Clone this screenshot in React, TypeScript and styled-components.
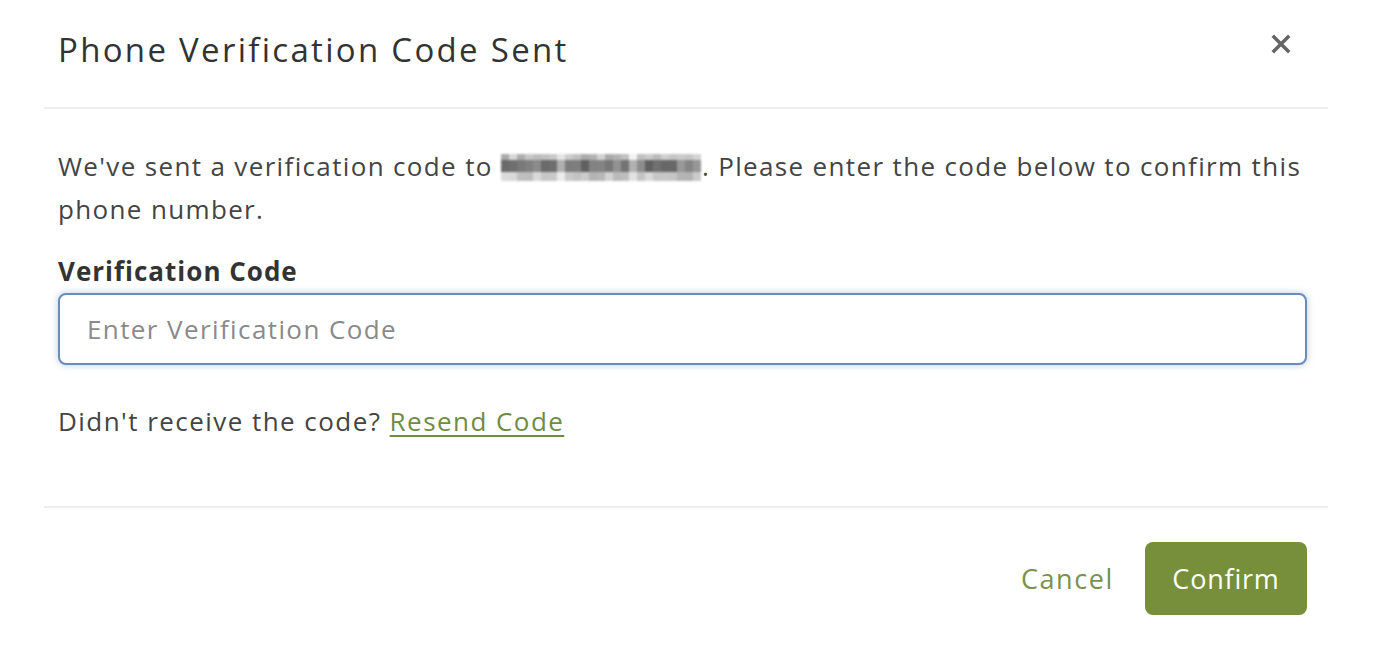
import React from "react";
import styled, { createGlobalStyle } from "styled-components";

const Global = createGlobalStyle`
  html, body { margin: 0; padding: 0; background: #ffffff; }
  body { font-family: "Open Sans", "Liberation Sans", sans-serif; }
  * { box-sizing: border-box; }
`;

const Modal = styled.div`
  width: 1284px;
  margin-left: 44px;
  display: flex;
  flex-direction: column;
  height: 657px;
`;

const Header = styled.div`
  height: 109px;
  display: flex;
  align-items: center;
  justify-content: space-between;
  padding: 0 36px 8px 14px;
  border-bottom: 2px solid #ededed;
`;

const Title = styled.h1`
  margin: 0;
  font-size: 33px;
  font-weight: 400;
  letter-spacing: 2.3px;
  color: #333333;
`;

const CloseButton = styled.button`
  border: none;
  background: none;
  padding: 0;
  width: 22px;
  height: 22px;
  display: flex;
  align-items: center;
  justify-content: center;
  cursor: pointer;
  margin-bottom: 12px;
`;

const Body = styled.div`
  padding: 36px 21px 63px 14px;
  border-bottom: 2px solid #ededed;
`;

const Paragraph = styled.p`
  margin: 0;
  font-size: 26px;
  line-height: 43px;
  letter-spacing: 1.35px;
  color: #444444;
`;

const MaskSvg = styled.svg`
  display: inline-block;
  vertical-align: -5px;
  margin: 0 1px 0 0;
  filter: blur(0.9px);
`;

const Label = styled.label`
  display: block;
  margin-top: 23px;
  font-size: 26px;
  line-height: 34px;
  font-weight: 700;
  letter-spacing: 1px;
  color: #333333;
`;

const Input = styled.input`
  display: block;
  width: 100%;
  height: 72px;
  margin-top: 5px;
  padding: 0 27px;
  border: 2px solid #6a8cba;
  border-radius: 8px;
  box-shadow: 0 0 6px 1px rgba(106, 140, 186, 0.35);
  font-family: inherit;
  font-size: 26px;
  letter-spacing: 1.4px;
  color: #333;
  outline: none;
  &::placeholder { color: #8a8a8a; }
`;

const Resend = styled.p`
  margin: 35px 0 0;
  font-size: 26px;
  line-height: 43px;
  letter-spacing: 1.45px;
  color: #444444;
`;

const Link = styled.a`
  color: #6f8c45;
  text-decoration: underline;
  text-underline-offset: 4px;
  text-decoration-thickness: 2px;
  cursor: pointer;
`;

const Footer = styled.div`
  display: flex;
  justify-content: flex-end;
  align-items: center;
  gap: 31px;
  padding: 34px 21px 0 0;
`;

const CancelButton = styled.button`
  border: none;
  background: none;
  padding: 0;
  font-family: inherit;
  font-size: 27px;
  letter-spacing: 1.6px;
  color: #7a9150;
  cursor: pointer;
`;

const ConfirmButton = styled.button`
  width: 162px;
  height: 73px;
  border: none;
  border-radius: 8px;
  background: #778f3a;
  color: #ffffff;
  font-family: inherit;
  font-size: 27px;
  letter-spacing: 0.8px;
  cursor: pointer;
`;

// pixelated phone-number mask: 25 columns x 3 rows of cells
const MASK_COLS = 25;
const ROWS = [
  { y: 0, h: 6 },
  { y: 6, h: 12 },
  { y: 18, h: 9 },
];
const groups = [0, 0, 0, 0, 0, 0, 0, 1, 0, 0, 0, 0, 0, 0, 0, 0, 1, 0, 0, 0, 0, 0, 0, 0, 0];
const shade = (c: number, r: number) => {
  const seed = Math.abs(Math.sin(c * 12.9898 + r * 78.233) * 43758.5453) % 1;
  if (groups[c] === 1) return r === 1 ? 160 + seed * 30 : 225 + seed * 20;
  if (r === 1) return 95 + seed * 60;
  if (r === 0) return 170 + seed * 50;
  return 175 + seed * 45;
};

function PhoneMask() {
  const cells: React.ReactElement[] = [];
  for (let c = 0; c < MASK_COLS; c++) {
    ROWS.forEach((row, r) => {
      const v = Math.round(shade(c, r));
      cells.push(
        <rect key={`${c}-${r}`} x={c * 8} y={row.y} width={8} height={row.h} fill={`rgb(${v},${v},${v})`} />
      );
    });
  }
  return (
    <MaskSvg width={200} height={27} viewBox="0 0 200 27" aria-hidden="true">
      {cells}
    </MaskSvg>
  );
}

export default function App() {
  return (
    <>
      <Global />
      <Modal>
        <Header>
          <Title>Phone Verification Code Sent</Title>
          <CloseButton aria-label="Close">
            <svg width="20" height="20" viewBox="0 0 20 20">
              <path d="M3 3 L17 17 M17 3 L3 17" stroke="#666" strokeWidth="3.5" strokeLinecap="square" />
            </svg>
          </CloseButton>
        </Header>
        <Body>
          <Paragraph>
            We've sent a verification code to <PhoneMask />. Please enter the code below to confirm this phone number.
          </Paragraph>
          <Label htmlFor="code">Verification Code</Label>
          <Input id="code" placeholder="Enter Verification Code" />
          <Resend>
            Didn't receive the code? <Link>Resend Code</Link>
          </Resend>
        </Body>
        <Footer>
          <CancelButton>Cancel</CancelButton>
          <ConfirmButton>Confirm</ConfirmButton>
        </Footer>
      </Modal>
    </>
  );
}
